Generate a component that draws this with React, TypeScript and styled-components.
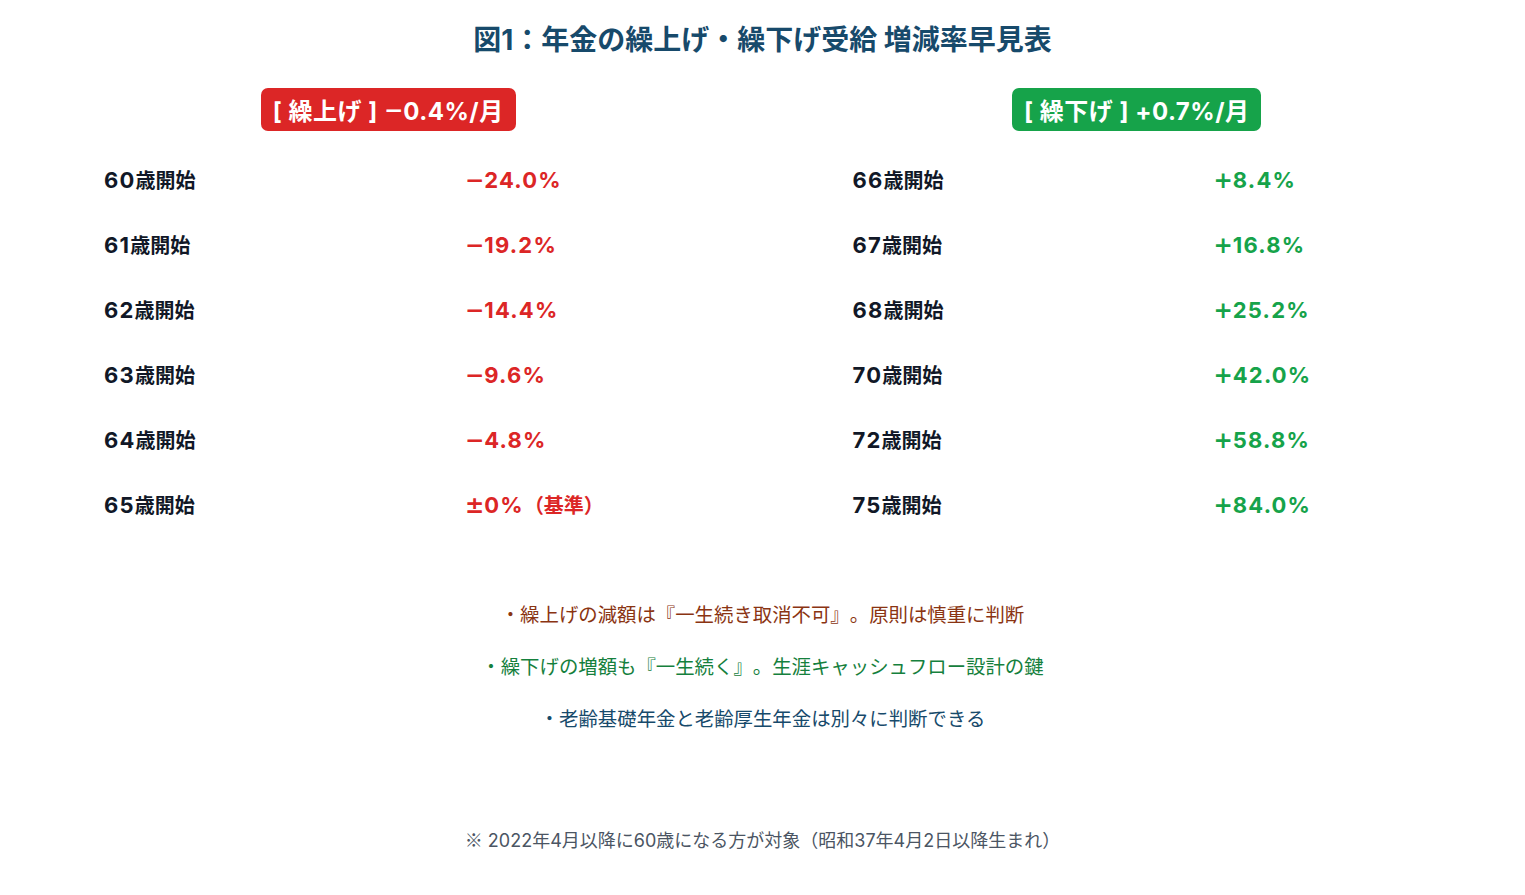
import React from "react";
import styled, { createGlobalStyle } from "styled-components";

const Global = createGlobalStyle`
  html, body { margin: 0; padding: 0; background: #ffffff; }
  body {
    font-family: Inter, "Noto Sans CJK JP", sans-serif;
    text-spacing-trim: space-all;
  }
`;

const Page = styled.div`
  width: 1525px;
  min-height: 895px;
  box-sizing: border-box;
  padding: 20px 80px 0;
  display: flex;
  flex-direction: column;
  align-items: stretch;
`;

const Title = styled.h1`
  margin: 0;
  text-align: center;
  font-size: 28px;
  line-height: 40px;
  font-weight: 700;
  color: #174a6b;
`;

const Columns = styled.div`
  display: grid;
  grid-template-columns: 1fr 1fr;
  column-gap: 132px;
  margin-top: 28px;
`;

const Column = styled.div`
  display: flex;
  flex-direction: column;
  align-items: center;
`;

const Badge = styled.div<{ $tone: "down" | "up" }>`
  height: 43px;
  box-sizing: border-box;
  padding: 0 12px;
  display: flex;
  align-items: center;
  border-radius: 7px;
  background: ${(p) => (p.$tone === "down" ? "#dc2626" : "#16a34a")};
  color: #ffffff;
  font-weight: 700;
  font-size: 24px;
  letter-spacing: 0.5px;
  white-space: pre;
`;

const Rows = styled.div`
  align-self: stretch;
  margin-top: 16px;
  padding: 0 24px;
  display: flex;
  flex-direction: column;
`;

const Row = styled.div`
  height: 65px;
  display: grid;
  grid-template-columns: 361px 1fr;
  align-content: center;
  align-items: baseline;
  font-weight: 700;
  font-size: 20px;
`;

const Num = styled.span`
  font-size: 22px;
  letter-spacing: 1.2px;
`;

const Sign = styled.span`
  font-family: "DejaVu Sans", sans-serif;
  font-size: 23px;
  letter-spacing: 0;
`;

const Sym = styled.span`
  font-family: "Noto Sans CJK JP", sans-serif;
`;

const Label = styled.span`
  color: #111827;
`;

const Value = styled.span<{ $tone: "down" | "up" }>`
  color: ${(p) => (p.$tone === "down" ? "#dc2626" : "#16a34a")};
`;

const Notes = styled.div`
  margin-top: 52px;
  display: flex;
  flex-direction: column;
  align-items: center;
`;

const Note = styled.p<{ $color: string }>`
  margin: 0;
  height: 52px;
  line-height: 52px;
  font-size: 19.4px;
  color: ${(p) => p.$color};
`;

const Footer = styled.p`
  margin: 81px 0 0;
  text-align: center;
  line-height: 26px;
  font-size: 18px;
  color: #4b5563;
`;

type Item = { age: string; sign: string; value: string; post?: string };

const left: Item[] = [
  { age: "60", sign: "−", value: "24.0%" },
  { age: "61", sign: "−", value: "19.2%" },
  { age: "62", sign: "−", value: "14.4%" },
  { age: "63", sign: "−", value: "9.6%" },
  { age: "64", sign: "−", value: "4.8%" },
  { age: "65", sign: "±", value: "0%", post: "（基準）" },
];

const right: Item[] = [
  { age: "66", sign: "+", value: "8.4%" },
  { age: "67", sign: "+", value: "16.8%" },
  { age: "68", sign: "+", value: "25.2%" },
  { age: "70", sign: "+", value: "42.0%" },
  { age: "72", sign: "+", value: "58.8%" },
  { age: "75", sign: "+", value: "84.0%" },
];

function RowList({ items, tone }: { items: Item[]; tone: "down" | "up" }) {
  return (
    <Rows>
      {items.map((it) => (
        <Row key={it.age}>
          <Label>
            <Num>{it.age}</Num>歳開始
          </Label>
          <Value $tone={tone}>
            <Sign>{it.sign}</Sign>
            <Num>{it.value}</Num>
            {it.post}
          </Value>
        </Row>
      ))}
    </Rows>
  );
}

export default function App() {
  return (
    <Page>
      <Global />
      <Title>図1：年金の繰上げ・繰下げ受給 増減率早見表</Title>
      <Columns>
        <Column>
          <Badge $tone="down">
            [ 繰上げ ] <Sign>−</Sign>0.4%/月
          </Badge>
          <RowList items={left} tone="down" />
        </Column>
        <Column>
          <Badge $tone="up">[ 繰下げ ] +0.7%/月</Badge>
          <RowList items={right} tone="up" />
        </Column>
      </Columns>
      <Notes>
        <Note $color="#8a3412">・繰上げの減額は『一生続き取消不可』。原則は慎重に判断</Note>
        <Note $color="#15803d">・繰下げの増額も『一生続く』。生涯キャッシュフロー設計の鍵</Note>
        <Note $color="#174a6b">・老齢基礎年金と老齢厚生年金は別々に判断できる</Note>
      </Notes>
      <Footer>
        <Sym>※</Sym> 2022年4月以降に60歳になる方が対象（昭和37年4月2日以降生まれ）
      </Footer>
    </Page>
  );
}
